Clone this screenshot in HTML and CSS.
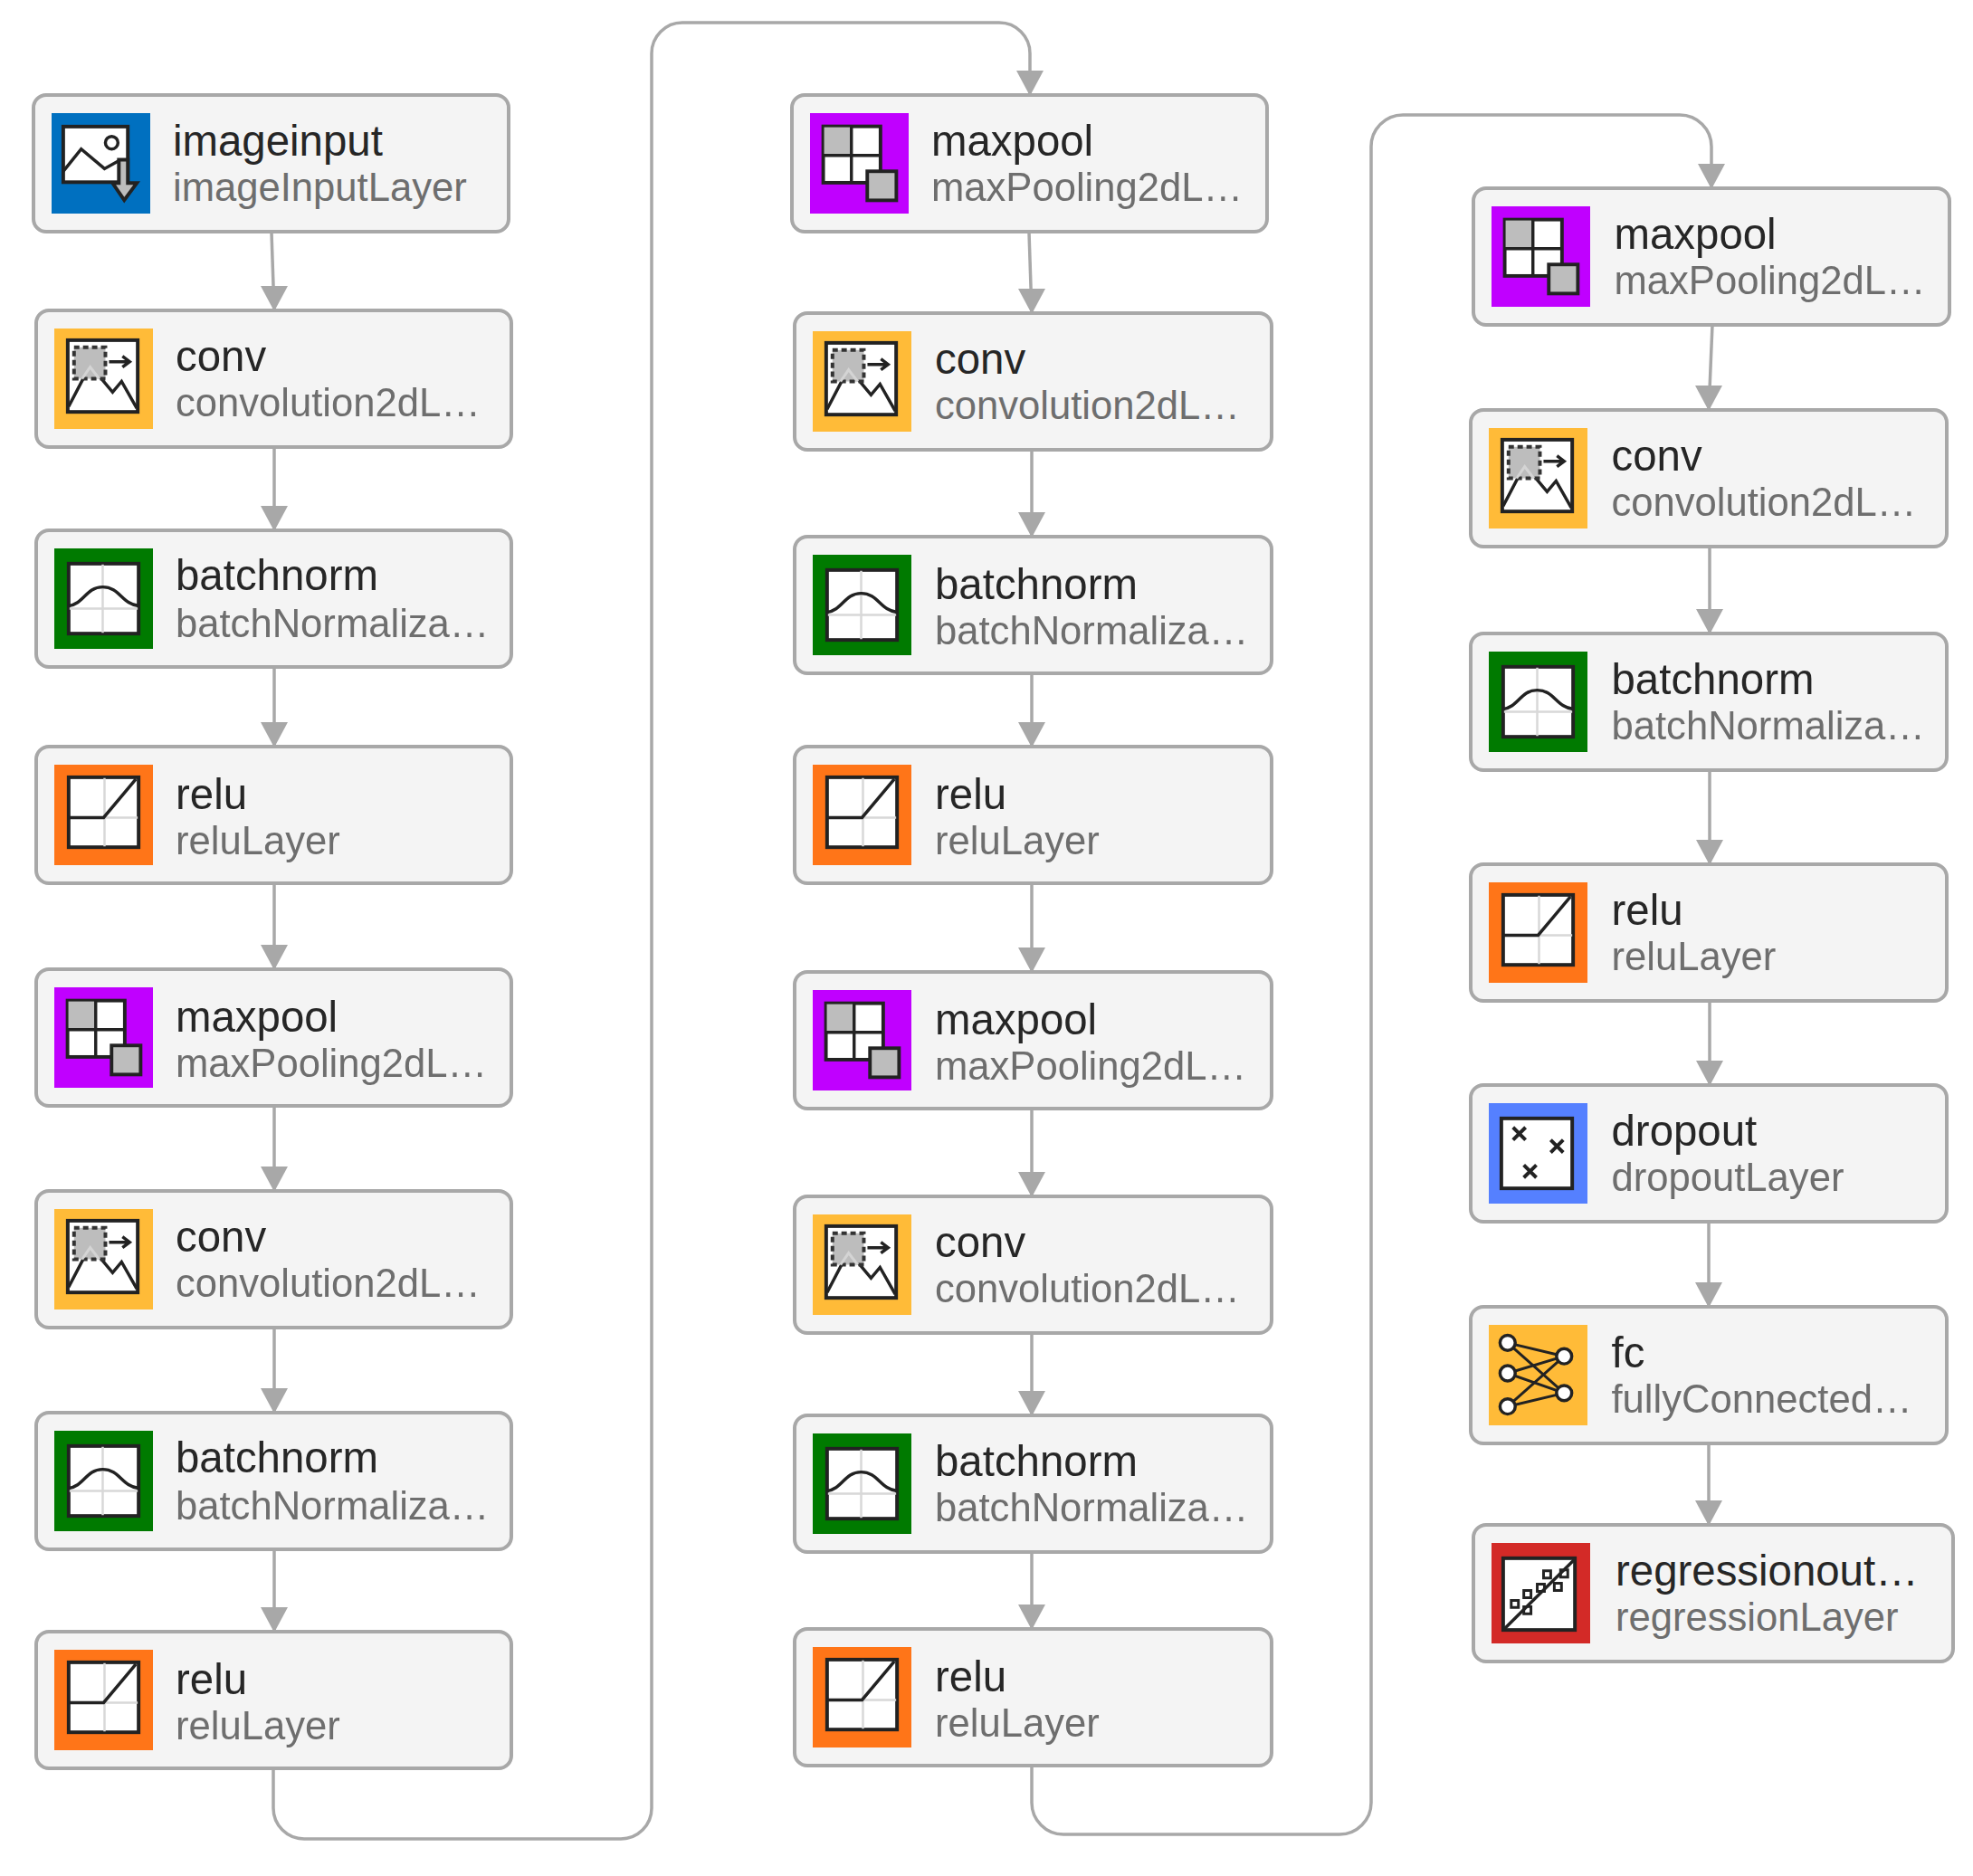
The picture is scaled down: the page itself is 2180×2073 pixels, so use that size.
FILE: index.html
```html
<!DOCTYPE html>
<html lang="en">
<head>
<meta charset="utf-8">
<title>Layer graph</title>
<link rel="stylesheet" href="styles.css">
</head>
<body>
<svg class="defs" width="0" height="0" aria-hidden="true">
  <defs>
    <marker id="head" markerUnits="userSpaceOnUse" markerWidth="32" markerHeight="28" viewBox="0 0 32 28" refX="16" refY="28" orient="0">
      <polygon points="1,0 31,0 16,28" fill="#a8a8a8"/>
    </marker>
    <symbol id="i-input" viewBox="0 0 108 112">
      <rect class="ic-frame" x="12" y="15" width="72" height="62"/>
      <path class="ic-line" d="M12 65L32 40L58 62L76 52"/>
      <circle class="ic-line" cx="66" cy="33" r="7"/>
      <path class="ic-gray" d="M74 52H84V78H94L80 97L67 78H74Z"/>
    </symbol>
    <symbol id="i-conv" viewBox="0 0 108 112">
      <rect class="ic-frame" x="14" y="13" width="78" height="80"/>
      <path class="ic-line" d="M15 87L39 41L64 71L74 59L91 89"/>
      <rect class="ic-dash" x="21" y="21" width="35" height="35"/>
      <path class="ic-peak" d="M30 56L39 43L49 56"/>
      <path class="ic-line" d="M60 37H82M75 31L83 37L75 43"/>
    </symbol>
    <symbol id="i-norm" viewBox="0 0 108 112">
      <rect class="ic-frame" x="15" y="17" width="78" height="78"/>
      <path class="ic-grid" d="M53 18V94M16 67H92"/>
      <path class="ic-line" d="M15 64C32 62 34 43 53 43C72 43 74 62 93 64"/>
    </symbol>
    <symbol id="i-relu" viewBox="0 0 108 112">
      <rect class="ic-frame" x="15" y="14" width="78" height="78"/>
      <path class="ic-grid" d="M55 15V91M16 59H92"/>
      <path class="ic-line" d="M15 59H54L90 16"/>
    </symbol>
    <symbol id="i-pool" viewBox="0 0 112 112">
      <rect class="ic-frame" x="15" y="14" width="65" height="64"/>
      <rect class="ic-fill" x="16" y="15" width="31" height="32"/>
      <path class="ic-line" d="M47 14V78M15 47H80"/>
      <rect class="ic-gray" x="65" y="65" width="33" height="33"/>
    </symbol>
    <symbol id="i-drop" viewBox="0 0 108 112">
      <rect class="ic-frame" x="13" y="17" width="79" height="78"/>
      <path class="ic-x" d="M26 27L40 41M40 27L26 41M68 41L82 55M82 41L68 55M38 69L52 83M52 69L38 83"/>
    </symbol>
    <symbol id="i-fc" viewBox="0 0 108 112">
      <path class="ic-thin" d="M20 20L83 35M20 20L83 76M20 54L83 35M20 54L83 76M20 91L83 35M20 91L83 76"/>
      <circle class="ic-node" cx="20" cy="20" r="8.5"/>
      <circle class="ic-node" cx="20" cy="54" r="8.5"/>
      <circle class="ic-node" cx="20" cy="91" r="8.5"/>
      <circle class="ic-node" cx="83" cy="35" r="8.5"/>
      <circle class="ic-node" cx="83" cy="76" r="8.5"/>
    </symbol>
    <symbol id="i-reg" viewBox="0 0 108 112">
      <rect class="ic-frame" x="12" y="17" width="80" height="80"/>
      <path class="ic-line" d="M13 96L92 18"/>
      <path class="ic-thin" d="M21 64h8v8h-8zM35 71h8v8h-8zM35 53h8v8h-8zM50 46h8v8h-8zM69 45h8v8h-8zM57 31h8v8h-8zM76 30h8v8h-8z"/>
    </symbol>
  </defs>
</svg>

<main class="stage">
  <svg class="edges" width="2180" height="2073" viewBox="0 0 2180 2073" aria-hidden="true">
    <path class="edge arrow" d="M300 257L303 344"/>
    <path class="edge arrow" d="M303 494V587"/>
    <path class="edge arrow" d="M303 738V826"/>
    <path class="edge arrow" d="M303 977V1072"/>
    <path class="edge arrow" d="M303 1223V1317"/>
    <path class="edge arrow" d="M303 1468V1562"/>
    <path class="edge arrow" d="M303 1713V1804"/>
    <path class="edge arrow" d="M302 1955V1998A34 34 0 0 0 336 2032H686A34 34 0 0 0 720 1998V59A34 34 0 0 1 754 25H1104A34 34 0 0 1 1138 59V106"/>
    <path class="edge arrow" d="M1137 257L1140 347"/>
    <path class="edge arrow" d="M1140 496V594"/>
    <path class="edge arrow" d="M1140 745V826"/>
    <path class="edge arrow" d="M1140 977V1075"/>
    <path class="edge arrow" d="M1140 1226V1323"/>
    <path class="edge arrow" d="M1140 1474V1565"/>
    <path class="edge arrow" d="M1140 1716V1801"/>
    <path class="edge arrow" d="M1140 1952V1992A35 35 0 0 0 1175 2027H1480A35 35 0 0 0 1515 1992V162A35 35 0 0 1 1550 127H1856A35 35 0 0 1 1891 162V209"/>
    <path class="edge arrow" d="M1892 359L1888 454"/>
    <path class="edge arrow" d="M1889 605V701"/>
    <path class="edge arrow" d="M1889 852V956"/>
    <path class="edge arrow" d="M1889 1107V1200"/>
    <path class="edge arrow" d="M1888 1351V1445"/>
    <path class="edge arrow" d="M1888 1596V1686"/>
  </svg>

  <article class="node c1 n01"><svg class="icon blue"><use href="#i-input"/></svg><div class="label"><div class="name">imageinput</div><div class="kind">imageInputLayer</div></div></article>
  <article class="node c1 n02"><svg class="icon yellow"><use href="#i-conv"/></svg><div class="label"><div class="name">conv</div><div class="kind">convolution2dL…</div></div></article>
  <article class="node c1 n03"><svg class="icon green"><use href="#i-norm"/></svg><div class="label"><div class="name">batchnorm</div><div class="kind">batchNormaliza…</div></div></article>
  <article class="node c1 n04"><svg class="icon orange"><use href="#i-relu"/></svg><div class="label"><div class="name">relu</div><div class="kind">reluLayer</div></div></article>
  <article class="node c1 n05"><svg class="icon purple"><use href="#i-pool"/></svg><div class="label"><div class="name">maxpool</div><div class="kind">maxPooling2dL…</div></div></article>
  <article class="node c1 n06"><svg class="icon yellow"><use href="#i-conv"/></svg><div class="label"><div class="name">conv</div><div class="kind">convolution2dL…</div></div></article>
  <article class="node c1 n07"><svg class="icon green"><use href="#i-norm"/></svg><div class="label"><div class="name">batchnorm</div><div class="kind">batchNormaliza…</div></div></article>
  <article class="node c1 n08"><svg class="icon orange"><use href="#i-relu"/></svg><div class="label"><div class="name">relu</div><div class="kind">reluLayer</div></div></article>

  <article class="node c2a n09"><svg class="icon purple"><use href="#i-pool"/></svg><div class="label"><div class="name">maxpool</div><div class="kind">maxPooling2dL…</div></div></article>
  <article class="node c2 n10"><svg class="icon yellow"><use href="#i-conv"/></svg><div class="label"><div class="name">conv</div><div class="kind">convolution2dL…</div></div></article>
  <article class="node c2 n11"><svg class="icon green"><use href="#i-norm"/></svg><div class="label"><div class="name">batchnorm</div><div class="kind">batchNormaliza…</div></div></article>
  <article class="node c2 n12"><svg class="icon orange"><use href="#i-relu"/></svg><div class="label"><div class="name">relu</div><div class="kind">reluLayer</div></div></article>
  <article class="node c2 n13"><svg class="icon purple"><use href="#i-pool"/></svg><div class="label"><div class="name">maxpool</div><div class="kind">maxPooling2dL…</div></div></article>
  <article class="node c2 n14"><svg class="icon yellow"><use href="#i-conv"/></svg><div class="label"><div class="name">conv</div><div class="kind">convolution2dL…</div></div></article>
  <article class="node c2 n15"><svg class="icon green"><use href="#i-norm"/></svg><div class="label"><div class="name">batchnorm</div><div class="kind">batchNormaliza…</div></div></article>
  <article class="node c2 n16"><svg class="icon orange"><use href="#i-relu"/></svg><div class="label"><div class="name">relu</div><div class="kind">reluLayer</div></div></article>

  <article class="node c3a n17"><svg class="icon purple"><use href="#i-pool"/></svg><div class="label"><div class="name">maxpool</div><div class="kind">maxPooling2dL…</div></div></article>
  <article class="node c3 n18"><svg class="icon yellow"><use href="#i-conv"/></svg><div class="label"><div class="name">conv</div><div class="kind">convolution2dL…</div></div></article>
  <article class="node c3 n19"><svg class="icon green"><use href="#i-norm"/></svg><div class="label"><div class="name">batchnorm</div><div class="kind">batchNormaliza…</div></div></article>
  <article class="node c3 n20"><svg class="icon orange"><use href="#i-relu"/></svg><div class="label"><div class="name">relu</div><div class="kind">reluLayer</div></div></article>
  <article class="node c3 n21"><svg class="icon periwinkle"><use href="#i-drop"/></svg><div class="label"><div class="name">dropout</div><div class="kind">dropoutLayer</div></div></article>
  <article class="node c3 n22"><svg class="icon yellow"><use href="#i-fc"/></svg><div class="label"><div class="name">fc</div><div class="kind">fullyConnected…</div></div></article>
  <article class="node c3b n23"><svg class="icon red"><use href="#i-reg"/></svg><div class="label"><div class="name">regressionout…</div><div class="kind">regressionLayer</div></div></article>
</main>
</body>
</html>
```

FILE: styles.css
```css
* { box-sizing: border-box; }

html, body {
  margin: 0;
  background: #fff;
}

.defs { position: absolute; }

.stage {
  position: relative;
  width: 2180px;
  height: 2073px;
  overflow: hidden;
  font-family: "Liberation Sans", Arial, sans-serif;
  filter: blur(0.7px);
}

.edges { position: absolute; left: 0; top: 0; }

.edge {
  fill: none;
  stroke: #a8a8a8;
  stroke-width: 3.5;
}

.arrow { marker-end: url(#head); }

/* Nodes: places on the free canvas of the diagram */
.node {
  position: absolute;
  display: flex;
  align-items: center;
  gap: 25px;
  height: 155px;
  padding-left: 18px;
  background: #f4f4f4;
  border: 4px solid #a8a8a8;
  border-radius: 16px;
}

.c1  { left: 38px; width: 529px; }
.c2a { left: 873px; width: 529px; }
.c2  { left: 876px; width: 531px; gap: 26px; }
.c3a { left: 1626px; width: 530px; gap: 26.5px; }
.c3  { left: 1623px; width: 530px; gap: 26.5px; }
.c3b { left: 1626px; width: 534px; gap: 28px; }

.n01 { left: 35px; top: 103px; }
.n02 { top: 341px; }
.n03 { top: 584px; }
.n04 { top: 823px; }
.n05 { top: 1069px; }
.n06 { top: 1314px; }
.n07 { top: 1559px; }
.n08 { top: 1801px; }

.n09 { top: 103px; }
.n10 { top: 344px; }
.n11 { top: 591px; }
.n12 { top: 823px; }
.n13 { top: 1072px; }
.n14 { top: 1320px; }
.n15 { top: 1562px; }
.n16 { top: 1798px; }

.n17 { top: 206px; }
.n18 { top: 451px; }
.n19 { top: 698px; }
.n20 { top: 953px; }
.n21 { top: 1197px; }
.n22 { top: 1442px; }
.n23 { top: 1683px; }

.icon {
  flex: none;
  display: block;
  width: 109px;
  height: 111px;
}

.blue { background: #0070c0; }
.yellow { background: #ffbb38; }
.green { background: #007a00; }
.orange { background: #ff7518; }
.purple { background: #c000ff; }
.periwinkle { background: #5580ff; }
.red { background: #d32a27; }

.ic-frame { fill: #fff; stroke: #222; stroke-width: 4; }
.ic-line { fill: none; stroke: #222; stroke-width: 3.5; }
.ic-x { fill: none; stroke: #222; stroke-width: 4; }
.ic-thin { fill: none; stroke: #222; stroke-width: 3; }
.ic-gray { fill: #bdbdbd; stroke: #222; stroke-width: 4; }
.ic-fill { fill: #bdbdbd; }
.ic-dash { fill: #bdbdbd; stroke: #333; stroke-width: 4; stroke-dasharray: 6 4; }
.ic-peak { fill: none; stroke: #d4d4d4; stroke-width: 3; }
.ic-grid { fill: none; stroke: #d8d8d8; stroke-width: 2.5; }
.ic-node { fill: #fff; stroke: #222; stroke-width: 3.5; }

.label {
  min-width: 0;
  white-space: nowrap;
}

/* the nodes whose labels sit a little lower in the card */
.n04 .label, .n05 .label, .n08 .label, .n11 .label,
.n12 .label, .n13 .label, .n16 .label {
  padding-top: 5px;
}

.name {
  font-size: 47.4px;
  line-height: 52px;
  color: #262626;
}

.kind {
  font-size: 43.6px;
  line-height: 50px;
  color: #6e6e6e;
}

.n03 .kind, .n07 .kind { margin-top: 2px; }
```
